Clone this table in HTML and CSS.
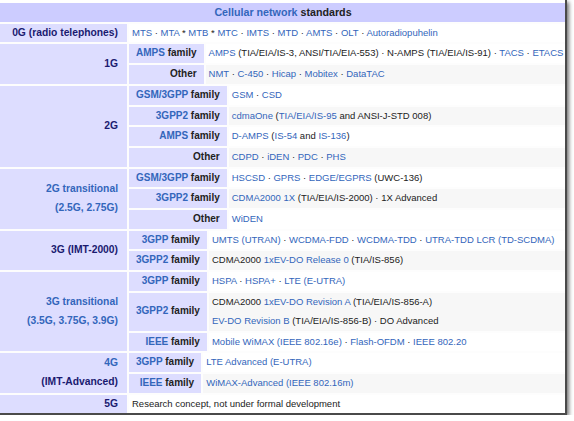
FILE: index.html
```html
<!DOCTYPE html>
<html>
<head>
<meta charset="utf-8">
<link rel="stylesheet" href="styles.css">
</head>
<body>
<div class="frame">
  <div class="navbox">
    <div class="title"><a class="link">Cellular network</a> standards</div>

    <div class="group"><span class="v">0G (radio telephones)</span></div>
    <div class="list odd"><a class="link">MTS</a> · <a class="link">MTA</a> * <a class="link">MTB</a> * <a class="link">MTC</a> · <a class="link">IMTS</a> · <a class="link">MTD</a> · <a class="link">AMTS</a> · <a class="link">OLT</a> · <a class="link">Autoradiopuhelin</a></div>

    <div class="group"><span class="v">1G</span></div>
    <div class="sub">
      <div class="sg"><span><a class="link">AMPS</a> family</span></div>
      <div class="list odd"><a class="link">AMPS</a> (TIA/EIA/IS-3, ANSI/TIA/EIA-553) · N-AMPS (TIA/EIA/IS-91) · <a class="link">TACS</a> · <a class="link">ETACS</a></div>
      <div class="sg"><span>Other</span></div>
      <div class="list even"><a class="link">NMT</a> · <a class="link">C-450</a> · <a class="link">Hicap</a> · <a class="link">Mobitex</a> · <a class="link">DataTAC</a></div>
    </div>

    <div class="group"><span class="v">2G</span></div>
    <div class="sub">
      <div class="sg"><span><a class="link">GSM/3GPP</a> family</span></div>
      <div class="list odd"><a class="link">GSM</a> · <a class="link">CSD</a></div>
      <div class="sg"><span><a class="link">3GPP2</a> family</span></div>
      <div class="list even"><a class="link">cdmaOne</a> (<a class="link">TIA/EIA/IS-95</a> and ANSI-J-STD 008)</div>
      <div class="sg"><span><a class="link">AMPS</a> family</span></div>
      <div class="list odd"><a class="link">D-AMPS</a> (<a class="link">IS-54</a> and <a class="link">IS-136</a>)</div>
      <div class="sg"><span>Other</span></div>
      <div class="list even"><a class="link">CDPD</a> · <a class="link">iDEN</a> · <a class="link">PDC</a> · <a class="link">PHS</a></div>
    </div>

    <div class="group"><span class="link">2G transitional<br>(2.5G, 2.75G)</span></div>
    <div class="sub">
      <div class="sg"><span><a class="link">GSM/3GPP</a> family</span></div>
      <div class="list odd"><a class="link">HSCSD</a> · <a class="link">GPRS</a> · <a class="link">EDGE/EGPRS</a> (UWC-136)</div>
      <div class="sg"><span><a class="link">3GPP2</a> family</span></div>
      <div class="list even"><a class="link">CDMA2000 1X</a> (TIA/EIA/IS-2000) · 1X Advanced</div>
      <div class="sg"><span>Other</span></div>
      <div class="list odd"><a class="link">WiDEN</a></div>
    </div>

    <div class="group"><span class="v">3G (IMT-2000)</span></div>
    <div class="sub">
      <div class="sg"><span><a class="link">3GPP</a> family</span></div>
      <div class="list odd"><a class="link">UMTS (UTRAN)</a> · <a class="link">WCDMA-FDD</a> · <a class="link">WCDMA-TDD</a> · <a class="link">UTRA-TDD LCR (TD-SCDMA)</a></div>
      <div class="sg"><span><a class="link">3GPP2</a> family</span></div>
      <div class="list even">CDMA2000 <a class="link">1xEV-DO Release 0</a> (TIA/IS-856)</div>
    </div>

    <div class="group"><span class="link">3G transitional<br>(3.5G, 3.75G, 3.9G)</span></div>
    <div class="sub">
      <div class="sg"><span><a class="link">3GPP</a> family</span></div>
      <div class="list odd"><a class="link">HSPA</a> · <a class="link">HSPA+</a> · <a class="link">LTE (E-UTRA)</a></div>
      <div class="sg"><span><a class="link">3GPP2</a> family</span></div>
      <div class="list even two"><div>CDMA2000 <a class="link">1xEV-DO Revision A</a> (TIA/EIA/IS-856-A)</div><div><a class="link">EV-DO Revision B</a> (TIA/EIA/IS-856-B) · DO Advanced</div></div>
      <div class="sg"><span><a class="link">IEEE</a> family</span></div>
      <div class="list odd"><a class="link">Mobile WiMAX (IEEE 802.16e)</a> · <a class="link">Flash-OFDM</a> · <a class="link">IEEE 802.20</a></div>
    </div>

    <div class="group"><span class="v"><span class="link">4G</span><br>(IMT-Advanced)</span></div>
    <div class="sub">
      <div class="sg"><span><a class="link">3GPP</a> family</span></div>
      <div class="list odd"><a class="link">LTE Advanced (E-UTRA)</a></div>
      <div class="sg"><span><a class="link">IEEE</a> family</span></div>
      <div class="list even"><a class="link">WiMAX-Advanced (IEEE 802.16m)</a></div>
    </div>

    <div class="group"><span class="v">5G</span></div>
    <div class="list odd">Research concept, not under formal development</div>
  </div>
</div>
</body>
</html>
```

FILE: styles.css
```css
html, body {
  margin: 0;
  padding: 0;
  background: #ffffff;
}

body {
  font-family: "Liberation Sans", Arial, sans-serif;
  font-size: 9.5px;
  color: #222222;
}

.frame {
  width: 567px;
  height: 415px;
  padding-top: 3px;
  box-sizing: border-box;
  background: #ffffff;
  border-right: 2px solid #4a4a4a;
  border-bottom: 2px solid #4a4a4a;
  box-shadow: 2px 2px 4px rgba(0, 0, 0, 0.55);
  overflow: hidden;
}

.navbox {
  width: 566px;
  display: grid;
  grid-template-columns: 127px minmax(0, 1fr);
  gap: 2px;
  background: #fdfdfd;
}

.link {
  color: #3366bb;
  text-decoration: none;
}

.v {
  color: #1a1a70;
}

.title {
  grid-column: 1 / 3;
  background: #ccccff;
  text-align: center;
  font-weight: bold;
  font-size: 10.7px;
  line-height: 18.7px;
}

.group {
  background: #ddddff;
  font-weight: bold;
  font-size: 10.3px;
  text-align: right;
  padding: 0 9px;
  line-height: 18.7px;
  display: flex;
  align-items: center;
  justify-content: flex-end;
}

.sub {
  display: grid;
  grid-template-columns: max-content minmax(0, 1fr);
  gap: 2px;
}

.sg {
  background: #ddddff;
  font-weight: bold;
  font-size: 10px;
  text-align: right;
  padding: 0 7px;
  line-height: 18.7px;
  display: flex;
  align-items: center;
  justify-content: flex-end;
  white-space: nowrap;
}

.list {
  line-height: 18.7px;
  padding: 0 3px;
  white-space: nowrap;
}

.list.odd {
  background: #ffffff;
}

.list.even {
  background: #f7f7f7;
}

.list.two {
  line-height: 18.9px;
}
```
